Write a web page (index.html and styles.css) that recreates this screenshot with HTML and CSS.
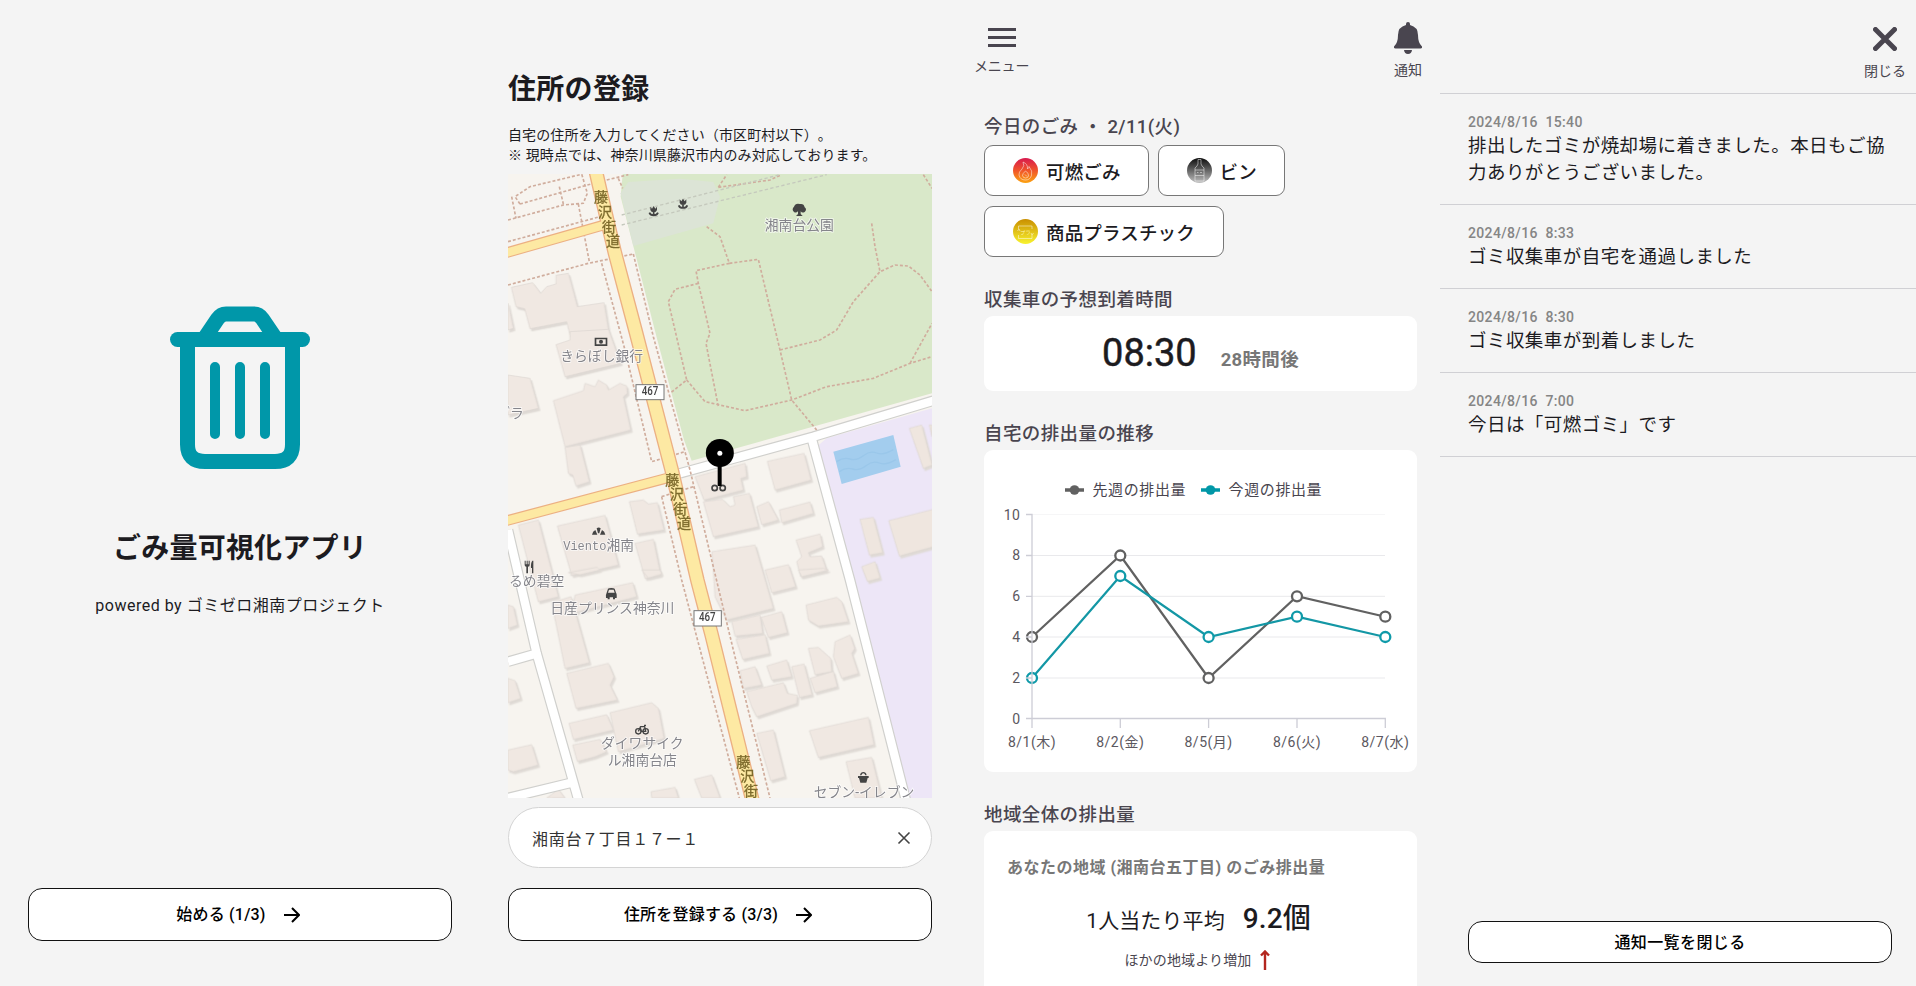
FILE: index.html
```html
<!DOCTYPE html>
<html lang="ja">
<head>
<meta charset="utf-8">
<title>ごみ量可視化アプリ</title>
<link rel="stylesheet" href="styles.css">
</head>
<body>
<main class="screens">

<section class="screen welcome">
  <svg class="trash" viewBox="0 0 140 163" fill="none" stroke="#0097a9" stroke-linecap="round">
    <path d="M7.500 33.500H132.500" stroke-width="15"/>
    <path d="M17.500 34V138.500Q17.500 155.500 35 155.500H105Q122.500 155.500 122.500 138.500V34" stroke-width="15"/>
    <path d="M35 31.500L47.500 13Q51 8 56 8H84Q89 8 92.500 13L105 31.500" stroke-width="15" stroke-linecap="butt"/>
    <path d="M45 61V128M70 61V128M95 61V128" stroke-width="10"/>
  </svg>
  <h1 class="app-title">ごみ量可視化アプリ</h1>
  <p class="powered">powered by ゴミゼロ湘南プロジェクト</p>
  <button class="btn push next">始める (1/3)<svg class="arrow" viewBox="0 0 16 16"><path d="M0 8H15M8 1L15 8L8 15"/></svg></button>
</section>

<section class="screen address">
  <h1 class="page-title">住所の登録</h1>
  <p class="lead">自宅の住所を入力してください（市区町村以下）。<br>※ 現時点では、神奈川県藤沢市内のみ対応しております。</p>
  <svg class="map" viewBox="24 372 1272 1872">
    <defs>
      <g id="scissors" fill="none" stroke="#444" stroke-width="5"><circle cx="-12" cy="6" r="8"/><circle cx="12" cy="6" r="8"/></g>
      <g id="tulip"><path d="M-10 -14L-5 -8L0 -16L5 -8L10 -14V-4Q8 3 0 3Q-8 3 -10 -4Z"/><path d="M-13 4Q-10 12 0 12Q10 12 13 4M0 2V14" fill="none" stroke="#444" stroke-width="5"/></g>
    </defs>
    <rect x="24" y="372" width="1272" height="1872" fill="#f7f4ef"/>
    <path fill="#d9e8c9" d="M368 372H1296V1030L575 1232L552 1170L472 870L362 440Z"/>
    <path fill="#dce4d6" d="M362 430L385 396L540 386L640 396L660 440L640 520L400 588Z"/>
    <path fill="#ede6f7" d="M950 1190L980 1165L1296 1075V2244H1224L1050 1590Z"/>
    <path fill="#a3cdee" d="M1000 1205L1180 1155L1202 1250L1025 1302Z"/>
    <path d="M1010 1235q20 -14 40 -8t40 -10t40 -8t50 -10M1018 1265q20 -14 40 -8t40 -10t40 -8t50 -10" fill="none" stroke="#9ac7ea" stroke-width="4"/>
    <g class="buildings">
      <path d="M34 712L98 698L122 730L140 710L168 702V676L205 670L232 770L312 758L326 845L248 852L212 864L200 815L90 836L74 776L48 770Z"/>
      <path d="M24 760L40 835L24 840Z"/>
      <path d="M168 884L210 870V845L325 838L362 940L195 980Z"/>
      <path d="M24 975L90 985L115 1075L24 1095Z"/>
      <g transform="translate(0 840)">
        <path d="M160 212L250 182L255 160L285 170L295 150L320 165L325 180L360 160L380 168L382 190L370 200L392 300L195 350Z"/>
        <path d="M195 352L240 345L268 455L228 468L218 435L205 430Z"/>
        <path d="M585 440L735 400L740 440L722 445L730 480L612 510Z"/>
        <path d="M802 394L912 370L933 450L825 480Z"/>
        <path d="M610 515L668 508L690 530L705 525L700 500L748 490L775 590L640 620Z"/>
        <path d="M770 530L805 515L835 570L785 584Z"/><path d="M838 540L930 516L940 550L845 578Z"/>
        <path d="M888 630L960 612L968 650L925 668L930 680L965 678L980 722L902 740L890 695L905 680Z"/>
        <path d="M636 665L765 645L820 835L680 870L645 800Z"/><path d="M795 720L865 704L887 770L815 788Z"/>
        <path d="M388 515L430 510L445 522L472 518L492 600L412 612Z"/><path d="M405 640L460 628L482 735L435 745Z"/>
        <path d="M172 588L315 556L355 705L215 736Z"/><path d="M55 585L115 570L175 800L115 815L95 740Z"/>
      </g>
      <g transform="translate(0 1560)">
        <path d="M225 75L398 38L410 80L215 130Z"/><path d="M155 98L213 80L268 278L195 295Z"/>
        <path d="M200 310L325 280L342 320L330 345L352 390L228 415Z"/><path d="M207 460L320 434L340 480L220 508Z"/>
        <path d="M330 428L455 398L475 415L492 505L355 545Z"/><path d="M218 525L300 508L320 545L285 560L232 574Z"/>
        <path d="M24 105L40 110L52 165L24 175Z"/><path d="M24 325L45 332L62 385L24 398Z"/><path d="M24 540L95 524L114 585L40 605L24 600Z"/>
        <path d="M205 8L290 -8L300 0L240 14Z"/><path d="M425 0H480L485 12L445 24Z"/>
        <path d="M695 155L780 135L788 190L705 198Z"/><path d="M783 142L845 125L862 188L805 202Z"/><path d="M708 208L795 194L808 250L728 268Z"/>
        <path d="M895 0L970 -5L985 0L905 20Z"/><path d="M918 105L1010 82L1025 95L1045 155L955 168L925 150Z"/>
        <path d="M720 302L765 290L785 345L730 355Z"/><path d="M800 288L860 270L875 320L815 330Z"/><path d="M875 290L912 282L936 374L898 382Z"/>
        <path d="M740 365L850 338L862 370L892 376L890 400L770 440L755 410Z"/><path d="M925 235L955 232L992 265L995 305L945 314Z"/><path d="M930 325L1000 304L1012 350L945 368Z"/>
        <path d="M1005 215L1050 195L1064 235L1055 250L1075 310L1025 325L1000 260Z"/><path d="M928 482L1105 442L1122 524L955 562Z"/>
        <path d="M770 490L820 480L855 620L812 632Z"/><path d="M583 628L635 615L660 684H605Z"/><path d="M453 665L525 652L535 684H455Z"/><path d="M1038 575L1115 562L1145 684H1065Z"/>
        <path d="M140 684L175 658L195 684Z"/>
      </g>
      <g class="tan"><path d="M1228 1135L1265 1125L1296 1245L1270 1255ZM1288 1125H1296V1160ZM1080 1408L1120 1402L1148 1508L1108 1515ZM1166 1412L1300 1378V1490L1198 1518ZM1085 1550L1125 1535L1140 1584L1102 1594Z"/></g>
    </g>
    <g fill="none" stroke="#d0d0cd">
      <path class="case" d="M540 1270L940 1160L1300 1052M935 1165L1050 1590L1220 2260M24 1440L110 1810L238 2260M24 1835L112 1810M24 2244L215 2198"/>
      <path class="white" d="M540 1270L940 1160L1300 1052M935 1165L1050 1590L1220 2260M24 1440L110 1810L238 2260M24 1835L112 1810M24 2244L215 2198"/>
    </g>
    <g class="trail">
      <path d="M24 575L300 500M24 510L190 465L250 460L262 430L245 372M60 462L280 400L385 374M60 462L45 440L90 410L240 374M35 440L48 505M178 410L190 462M235 462L268 635M24 705L265 640L400 612M355 385L368 415M400 612L460 860L570 1260L700 1800L810 2244M305 640L375 900L455 1235L555 1205M485 1340L580 1310M485 1340L545 1590L718 2244"/>
      <path d="M620 530L660 560L688 640L775 628L840 900L875 1050L950 1140M688 640L588 662L595 700L630 850L618 880L655 1070M595 700L525 718L505 755L560 990L510 1030M560 990L615 1055L735 1082L875 1050L980 1010L1120 985L1230 940L1296 920M840 900L960 870L1010 840L1060 755L1140 665L1185 645L1225 648L1260 675L1296 725M1115 520L1125 590L1140 665M1230 940L1296 820M655 412L680 374M655 412L810 390L845 374M1270 374L1296 415"/>
    </g>
    <path d="M365 495L840 374M365 525L980 374" fill="none" stroke="#c5c9bd" stroke-width="4" stroke-dasharray="10 7"/>
    <g fill="none">
      <path stroke="#ecb083" stroke-width="32" d="M20 608L315 524M20 1412L510 1282"/>
      <path stroke="#ecb083" stroke-width="44" d="M288 366L312 470L345 610L406 840L515 1260L592 1590L635 1755L757 2250"/>
      <path stroke="#fde9a3" stroke-width="25" d="M20 608L315 524M20 1412L510 1282"/>
      <path stroke="#fde9a3" stroke-width="36" d="M288 366L312 470L345 610L406 840L515 1260L592 1590L635 1755L757 2250"/>
    </g>
    <g class="road-name">
      <text x="303" y="457">藤</text><text x="315" y="500">沢</text><text x="327" y="545">街</text><text x="339" y="588">道</text>
      <text x="517" y="1305">藤</text><text x="530" y="1348">沢</text><text x="541" y="1391">街</text><text x="552" y="1434">道</text>
      <text x="730" y="2150">藤</text><text x="742" y="2194">沢</text><text x="753" y="2237">街</text>
    </g>
    <g fill="#fff" stroke="#777" stroke-width="3"><rect x="408" y="1004" width="84" height="45"/><rect x="582" y="1682" width="82" height="46"/></g>
    <g class="shield"><text x="450" y="1034" textLength="50" lengthAdjust="spacingAndGlyphs">467</text><text x="622" y="1712" textLength="50" lengthAdjust="spacingAndGlyphs">467</text></g>
    <g class="place">
      <text x="898" y="540">湘南台公園</text><text x="305" y="932">きらぼし銀行</text><text x="30" y="1103">ブラ</text>
      <text x="296" y="1501"><tspan class="mono">Viento</tspan>湘南</text><text x="110" y="1609">るめ碧空</text><text x="337" y="1690">日産プリンス神奈川</text>
      <text x="427" y="2095">ダイワサイク</text><text x="427" y="2146">ル湘南台店</text><text x="1092" y="2240">セブン-イレブン</text>
    </g>
    <g fill="#444">
      <use href="#tulip" x="461" y="484"/><use href="#tulip" x="549" y="462"/>
      <path d="M882 486Q874 478 882 470Q886 458 900 462Q912 460 914 472Q922 478 914 486Q906 490 902 484V492L908 498H888L894 492V484Q888 490 882 486Z"/>
      <path d="M284 863H322V888H284ZM289 868V883H317V868Z" fill-rule="evenodd"/><circle cx="303" cy="875.500" r="6"/>
      <path d="M290 1435Q296 1430 302 1435L298 1450H294ZM286 1440L292 1454H276Q278 1444 286 1440ZM306 1440L300 1454H316Q314 1444 306 1440Z"/>
      <path d="M74 1532V1545Q74 1550 79 1550V1570H84V1550Q89 1550 89 1545V1532H86V1543H83V1532H80V1543H77V1532ZM97 1532Q92 1538 93 1554H96V1570H100V1532Z"/>
      <path fill-rule="evenodd" d="M324 1616Q326 1614 334 1614Q342 1614 344 1616L348 1628Q351 1631 350 1644H345V1648H339V1642H329V1648H323V1644H318Q317 1632 320 1628ZM327 1619L324 1628H344L341 1619Z"/>
      <g fill="none" stroke="#444" stroke-width="4"><circle cx="415" cy="2044" r="8"/><circle cx="437" cy="2044" r="8"/><path d="M415 2044L422 2030H434L437 2044L424 2044L420 2030M432 2026H438"/></g>
      <path d="M1074 2178H1106V2184H1103L1099 2198H1081L1077 2184H1074ZM1080 2176Q1082 2166 1090 2166Q1098 2166 1100 2176H1096Q1094 2170 1090 2170Q1086 2170 1084 2176Z"/>
    </g>
    <use href="#scissors" x="656" y="1308"/>
    <path d="M659 1240V1308" stroke="#000" stroke-width="12"/>
    <circle cx="659.500" cy="1209" r="42"/><circle cx="659.500" cy="1209.500" r="7.500" fill="#fff"/>
  </svg>
  <div class="search"><span>湘南台７丁目１７ー１</span><svg viewBox="0 0 12 12"><path d="M.5.5L11.500 11.500M11.500.5L.5 11.500"/></svg></div>
  <button class="btn next">住所を登録する (3/3)<svg class="arrow" viewBox="0 0 16 16"><path d="M0 8H15M8 1L15 8L8 15"/></svg></button>
</section>

<section class="screen home">
  <header class="bar">
    <div class="tool menu"><svg width="28" height="19" viewBox="0 0 28 19"><path d="M0 0H28V3H0ZM0 8H28V11H0ZM0 16H28V19H0Z"/></svg><span>メニュー</span></div>
    <div class="tool bell"><svg width="28" height="32" viewBox="0 0 28 32"><path d="M12 3V2Q12 0 14 0Q16 0 16 2V3Q24 5 24 13Q24 21 28 24.500Q28.500 26.500 26.500 26.500H1.500Q-.5 26.500 0 24.500Q4 21 4 13Q4 5 12 3ZM10 28H18Q17.500 32 14 32Q10.500 32 10 28Z"/></svg><span>通知</span></div>
  </header>
  <h2 class="today">今日のごみ ・ 2/11(火)</h2>
  <div class="chips">
    <div class="chip"><svg viewBox="0 0 25 25"><defs><linearGradient id="gf" x2="0" y2="1"><stop stop-color="#d8194f"/><stop offset=".5" stop-color="#f0552a"/><stop offset="1" stop-color="#fca311"/></linearGradient></defs><circle cx="12.500" cy="12.500" r="12.500" fill="url(#gf)"/><path class="thin" d="M10 4Q15 6 14.500 11Q16 10 16 8.500Q20 13 18.500 17.500Q17 22 12.500 22Q7 22 6 17Q5.500 14 9 11Q12 8 10 4ZM12.500 13Q16 15 15.500 18Q15 20 12.500 20Q10 20 9.500 17.500Q9.500 15.500 12.500 13ZM12 16.500L14 18.500"/></svg>可燃ごみ</div>
    <div class="chip"><svg viewBox="0 0 25 25"><defs><linearGradient id="gb" x2="0" y2="1"><stop stop-color="#0c0c0c"/><stop offset="1" stop-color="#c0c0c0"/></linearGradient></defs><circle cx="12.500" cy="12.500" r="12.500" fill="url(#gb)"/><path class="thin" d="M11 1.500H14V6Q14.500 8 17 10V23H8V10Q10.500 8 11 6ZM8 12H17M8 17.500H17M10 14.500H11.500M13 14.500H15"/></svg>ビン</div>
    <div class="chip"><svg viewBox="0 0 25 25"><defs><linearGradient id="gp" x2="0" y2="1"><stop stop-color="#c98e00"/><stop offset="1" stop-color="#f8f330"/></linearGradient></defs><circle cx="12.500" cy="12.500" r="12.500" fill="url(#gp)"/><path class="thin" d="M5.500 10V7H19V10M19 16V19.500H5.500V16M4.500 12L6 10L7 12M18 14L19 16L20.500 14"/><text class="pla" x="12.500" y="15">プラ</text></svg>商品プラスチック</div>
  </div>
  <h2>収集車の予想到着時間</h2>
  <div class="card eta"><span class="clock">08:30</span><span class="later">28時間後</span></div>
  <h2>自宅の排出量の推移</h2>
  <div class="card chart">
    <div class="legend">
      <svg viewBox="0 0 19 10"><path d="M0 5H19" stroke="#616161" stroke-width="3.500"/><circle cx="9.500" cy="5" r="4.800" fill="#616161"/></svg><span>先週の排出量</span>
      <svg viewBox="0 0 19 10"><path d="M0 5H19" stroke="#0097a7" stroke-width="3.500"/><circle cx="9.500" cy="5" r="4.800" fill="#0097a7"/></svg><span>今週の排出量</span>
    </div>
    <svg class="plot" viewBox="984 501 433 271">
      <path d="M1033 555.500H1386M1033 596.300H1386M1033 637H1386M1033 678H1386" stroke="#e9e9ec"/>
      <path d="M1033 514.500H1386" stroke="#f6f6f7"/>
      <g fill="none" stroke-width="2.200">
        <path stroke="#616161" d="M1033 637L1121.300 555.500L1209.600 678L1298 596.300L1386.300 616.700"/>
        <path stroke="#1397a5" d="M1033 678L1121.300 576L1209.600 637L1298 616.700L1386.300 637"/>
      </g>
      <g fill="#fff" stroke-width="2.300" stroke="#616161"><circle cx="1033" cy="637" r="5"/><circle cx="1121.300" cy="555.500" r="5"/><circle cx="1209.600" cy="678" r="5"/><circle cx="1298" cy="596.300" r="5"/><circle cx="1386.300" cy="616.700" r="5"/></g>
      <g fill="#fff" stroke-width="2.300" stroke="#0f9aa9"><circle cx="1033" cy="678" r="5"/><circle cx="1121.300" cy="576" r="5"/><circle cx="1209.600" cy="637" r="5"/><circle cx="1298" cy="616.700" r="5"/><circle cx="1386.300" cy="637" r="5"/></g>
      <path fill="none" stroke="#cdcdd6" stroke-width="1.300" d="M1027 514.500H1033V728M1027 718.500H1386.300V728M1121.300 718.500V728M1209.600 718.500V728M1298 718.500V728M1027 555.500H1033M1027 596.300H1033M1027 637H1033M1027 678H1033"/>
      <g class="ylab"><text x="1021.500" y="519.500">10</text><text x="1021.500" y="560.300">8</text><text x="1021.500" y="601">6</text><text x="1021.500" y="642">4</text><text x="1021.500" y="683">2</text><text x="1021.500" y="723.500">0</text></g>
      <g class="xlab"><text x="1033" y="746.500">8/1(木)</text><text x="1121.300" y="746.500">8/2(金)</text><text x="1209.600" y="746.500">8/5(月)</text><text x="1298" y="746.500">8/6(火)</text><text x="1386.300" y="746.500">8/7(水)</text></g>
    </svg>
  </div>
  <h2>地域全体の排出量</h2>
  <div class="card region">
    <p class="area">あなたの地域 (湘南台五丁目) のごみ排出量</p>
    <p class="avg"><span>1人当たり平均</span><strong>9.2個</strong></p>
    <p class="trend">ほかの地域より増加<svg viewBox="0 0 10 20"><path d="M5 20V1.500M1 5.500L5 1.500L9 5.500"/></svg></p>
  </div>
</section>

<section class="screen notices">
  <header class="close"><svg width="24" height="24" viewBox="0 0 24 24"><path d="M2.500 2.500L21.500 21.500M21.500 2.500L2.500 21.500"/></svg><span>閉じる</span></header>
  <article><time>2024/8/16&nbsp; 15:40</time><p>排出したゴミが焼却場に着きました。本日もご協<br>力ありがとうございました。</p></article>
  <article><time>2024/8/16&nbsp; 8:33</time><p>ゴミ収集車が自宅を通過しました</p></article>
  <article><time>2024/8/16&nbsp; 8:30</time><p>ゴミ収集車が到着しました</p></article>
  <article><time>2024/8/16&nbsp; 7:00</time><p>今日は「可燃ゴミ」です</p></article>
  <button class="btn small push">通知一覧を閉じる</button>
</section>

</main>
</body>
</html>
```
FILE: styles.css
```css
* { box-sizing: border-box; }
body { margin: 0; background: #f4f4f4; color: #1c1b1f; font-family: Roboto, "Noto Sans CJK JP", sans-serif; text-spacing-trim: space-all; }
h1, h2, p { margin: 0; }
.screens { display: grid; grid-template-columns: 480px 480px 480px 476px; height: 986px; overflow: hidden; }
.screen { display: flex; flex-direction: column; height: 986px; overflow: hidden; }

.btn { display: flex; align-items: center; justify-content: center; gap: 18px; flex: none; height: 53px; padding: 0; border: 1.3px solid #111; border-radius: 14px; background: #fff; color: #000; font: 500 16px/24px Roboto, "Noto Sans CJK JP", sans-serif; letter-spacing: .2px; }
.next { padding-right: 4px; }
.push { margin-top: auto; }
.arrow { width: 16px; height: 16px; fill: none; stroke: #000; stroke-width: 2; }

.welcome { padding: 306px 28px 45px; }
.trash { width: 140px; height: 163px; align-self: center; flex: none; }
.app-title { margin-top: 60px; font-size: 28px; line-height: 40px; text-align: center; letter-spacing: .2px; }
.powered { margin-top: 25px; font-size: 16px; line-height: 24px; letter-spacing: .5px; text-align: center; }

.address { padding: 70px 28px 0; }
.page-title { font-size: 28px; line-height: 40px; font-weight: 700; letter-spacing: .3px; }
.lead { margin-top: 15px; font-size: 14px; line-height: 20px; letter-spacing: .12px; white-space: nowrap; }
.map { flex: none; width: 424px; height: 624px; margin-top: 9px; }
.buildings { fill: #f0e8e2; stroke: #ddd7d1; stroke-width: 2; filter: drop-shadow(5px 7px 0 #dfdad5); }
.tan { fill: #efe6df; }
.case { stroke-width: 32px; }
.white { stroke: #fff; stroke-width: 25px; }
.trail { fill: none; stroke: #d0ad9d; stroke-width: 5px; stroke-dasharray: 9 6; }
.road-name { font-size: 42px; fill: #7d6b2c; text-anchor: middle; stroke: #7d6b2c; stroke-width: 1px; }
.shield { font: 500 36px Roboto, sans-serif; fill: #444; text-anchor: middle; }
.place { font-size: 41.5px; fill: #85858b; text-anchor: middle; stroke: #fff; stroke-opacity: .7; stroke-width: 5px; paint-order: stroke; }
.mono { font-family: "Liberation Mono", monospace; font-size: 36px; }
.search { display: flex; align-items: center; justify-content: space-between; flex: none; height: 61px; margin: 9px 0 20px; padding: 0 21px 0 23px; border: 1px solid #d4d4d4; border-radius: 31px; background: #fff; font-size: 16px; letter-spacing: .7px; color: #333; }
.search svg { width: 12px; height: 12px; overflow: visible; stroke: #444; stroke-width: 1.6; }

.home { padding: 0 23px 0 24px; color: #49454f; }
.bar { display: flex; justify-content: space-between; height: 113px; flex: none; margin: 0 -5px 0 -10px; }
.tool { display: flex; flex-direction: column; align-items: center; font-size: 14px; line-height: 20px; }
.tool svg, .close path { fill: #49454f; }
.menu { padding-top: 28px; gap: 9px; }
.bell { padding-top: 22px; gap: 6px; }
.menu span { letter-spacing: -.2px; }
.home h2 { flex: none; margin: 29px 0 2px; font-size: 18.500px; line-height: 28px; font-weight: 500; letter-spacing: .4px; }
.home .today { margin: 0 0 4px; }
.chips { display: flex; flex-wrap: wrap; gap: 10px 9px; flex: none; }
.chip { display: flex; align-items: center; gap: 8px; height: 51px; padding: 0 28px; border: 1.200px solid #777; border-radius: 9px; background: #fff; color: #1c1b1f; font-size: 18.500px; font-weight: 500; letter-spacing: .15px; }
.chip svg { width: 25px; height: 25px; }
.chip:nth-child(-n+2) { padding-right: 27px; }
.thin { fill: none; stroke: #fff; stroke-opacity: .7; stroke-width: .7; }
.pla { font-size: 5px; font-weight: 400; fill: #fff8b0; text-anchor: middle; }
.card { flex: none; background: #fff; border-radius: 9px; }
.eta { display: flex; align-items: baseline; justify-content: center; gap: 24px; height: 75px; padding-top: 15px; }
.clock { font-size: 38px; line-height: 44px; font-weight: 400; color: #1c1b1f; -webkit-text-stroke: .5px #1c1b1f; }
.later { font-size: 18.500px; font-weight: 700; letter-spacing: .3px; color: #777; line-height: 28px; }
.chart { height: 322px; }
.legend { display: flex; align-items: center; height: 51px; padding: 29px 0 0 80.500px; font-size: 15px; line-height: 22px; letter-spacing: .6px; }
.legend svg { width: 19px; height: 10px; margin-right: 9px; }
.legend span { margin-right: 14.500px; }
.plot { display: block; width: 433px; height: 271px; margin-left: -1px; fill: #5b5860; font-size: 14px; letter-spacing: .5px; }
.plot text { stroke: none; }
.ylab { text-anchor: end; }
.xlab { text-anchor: middle; }
.region { height: 200px; padding-top: 25px; }
.area { padding-left: 23px; font-size: 16px; line-height: 24px; font-weight: 700; letter-spacing: .5px; color: #777; }
.avg { display: flex; align-items: baseline; justify-content: center; gap: 18px; margin-top: 19px; padding-right: 4px; color: #1c1b1f; line-height: 40px; font-size: 21px; letter-spacing: .1px; }
.avg strong { font-size: 28px; font-weight: 500; }
.trend { display: flex; align-items: center; justify-content: center; gap: 8px; margin-top: 9px; padding-right: 7px; font-size: 14px; line-height: 20px; letter-spacing: .15px; }
.trend svg { width: 10px; height: 20px; fill: none; stroke: #b3261e; stroke-width: 2.400; }

.notices { padding-bottom: 23px; }
.close { display: flex; flex-direction: column; align-items: center; align-self: flex-end; height: 93px; flex: none; padding: 27px 10px 0 0; gap: 10px; font-size: 14px; line-height: 20px; color: #49454f; }
.close path { stroke: #49454f; stroke-width: 5; stroke-linecap: round; }
.notices article { flex: none; padding: 19px 28px 17px; border-top: 1.300px solid #d0d0d4; }
.notices article:last-of-type { border-bottom: 1px solid #d0d0d4; }
.notices time { display: block; margin-bottom: 1px; font-size: 14px; line-height: 19px; font-weight: 500; letter-spacing: .35px; color: #858585; }
.notices p { font-size: 18.500px; line-height: 27px; letter-spacing: .45px; white-space: nowrap; }
.small { height: 42px; margin-left: 28px; margin-right: 24px; padding-top: 2px; letter-spacing: .4px; }
```
